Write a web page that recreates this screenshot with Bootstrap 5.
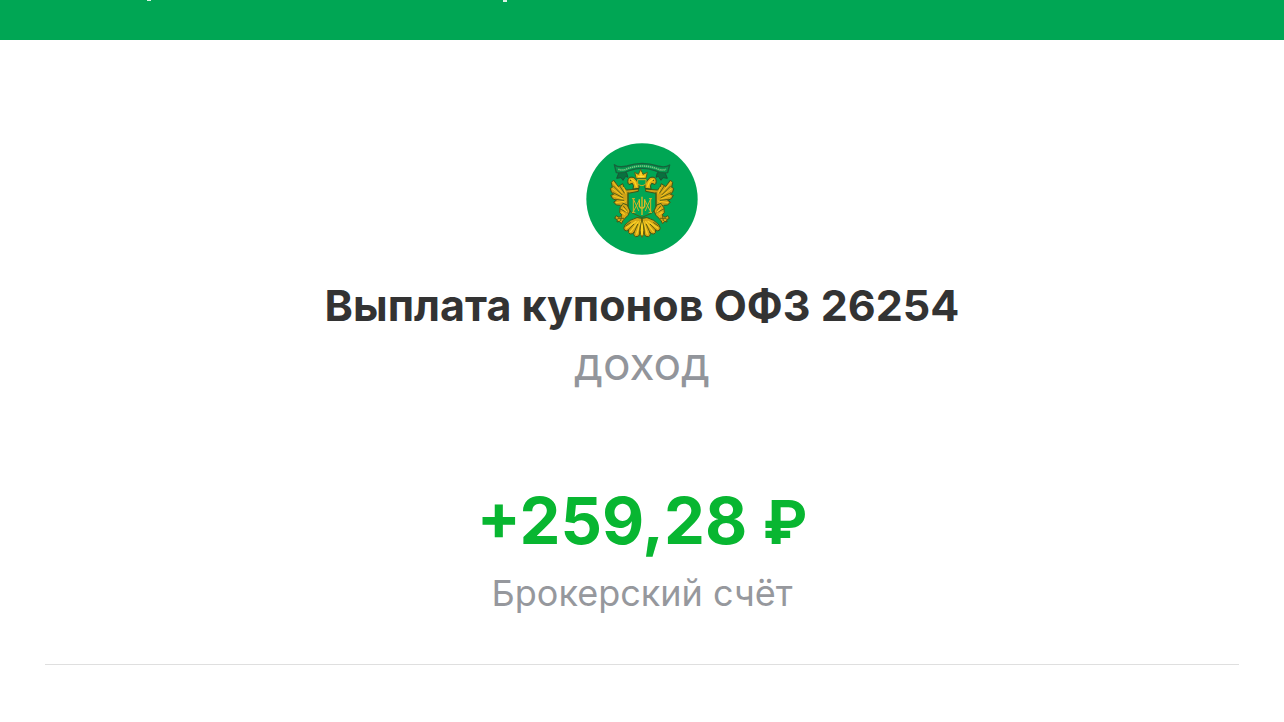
<!DOCTYPE html>
<html lang="ru">
<head>
<meta charset="utf-8">
<meta name="viewport" content="width=device-width, initial-scale=1">
<title>Выплата купонов ОФЗ 26254</title>
<link href="https://cdn.jsdelivr.net/npm/bootstrap@5.3.0/dist/css/bootstrap.min.css" rel="stylesheet">
<style>
body{font-family:Inter,"Liberation Sans",sans-serif;background:#fff;color:#333}
.topbar{height:40px;background:#00a654}
.tail{width:4px;height:1px;background:#d9f2e5}
.tail-first{margin-left:147px}
.tail-second{margin-left:352px;height:2px}
.operation{padding:103px 45px 0}
.emblem{width:112px;height:112px}
.op-title{font-size:43px;line-height:52px;font-weight:700;margin:24px 0 0}
.op-kind{font-size:46px;line-height:60px;color:#92959b;margin:2px 0 0}
.op-sum{font-size:65px;line-height:80px;font-weight:700;color:#08b631;margin:88px 0 0}
.currency{font-size:60px;line-height:60px}
.op-account{font-size:36px;line-height:44px;color:#96989d;margin:10px 0 0}
.rule{border-top:1px solid #dfdfdf;margin:49px 0 0;opacity:1;width:100%}
</style>
</head>
<body>
<header class="topbar d-flex align-items-start" aria-hidden="true">
<span class="tail tail-first"></span><span class="tail tail-second"></span>
</header>
<main class="operation d-flex flex-column align-items-center text-center">
<svg class="emblem" viewBox="19 15 336 336" role="img" aria-label="Минфин России">
<circle cx="187" cy="183" r="167" fill="#00a654"/>
<defs>
<g id="side" stroke-linejoin="round" stroke-linecap="round">
<path d="M101 127L95 133L98 148L92 151L95 162L102 169L93 172L99 182L110 187L102 192L110 201L122 202L130 208L145 204V166L176 160V153L141 156Q131 150 129 137L117 145Z" fill="#cfa118" stroke="#3e5717" stroke-width="3"/>
<path d="M101 134L128 165M99 153L128 174M101 174L130 183M109 194L132 190M124 202L139 188M132 148L138 166" fill="none" stroke="#f8c81c" stroke-width="3"/>
<path d="M101 144L127 170M100 164L130 179M107 184L132 187M121 145L134 165" fill="none" stroke="#5d6111" stroke-width="3"/>
<path d="M145 135Q142 123 151 118Q164 115 170 127L178 137V151L160 153Q164 142 158 136L149 139Z" fill="#dfad17" stroke="#344e1a" stroke-width="3"/>
<path d="M155 125L165 131L170 145" fill="none" stroke="#ffd51c" stroke-width="4"/>
<circle cx="153" cy="127" r="2" fill="#344e1a"/>
<path d="M145 163V203Q147 222 166 229L187 238" fill="none" stroke="#416116" stroke-width="3"/>
<path d="M129 197Q117 209 120 224L127 231L118 238L110 233L105 241L113 245L112 252L119 250L125 257L130 248L136 241L145 232L151 219L143 202Z" fill="#d9a717" stroke="#425817" stroke-width="3"/>
<path d="M122 213L145 225M131 204L143 220M115 241L132 241M126 231L123 248" fill="none" stroke="#67600f" stroke-width="3"/>
<path d="M132 212L142 222M127 223L134 229" fill="none" stroke="#f8c81d" stroke-width="4"/>
<path d="M171 239Q150 244 136 261Q129 272 135 277Q141 281 147 275Q143 285 151 288Q158 290 164 281Q159 292 168 296Q177 298 181 287L187 242Z" fill="#d5a516" stroke="#425817" stroke-width="3"/>
<path d="M169 250L140 270M176 251L153 281M183 250L171 288" fill="none" stroke="#f8d128" stroke-width="4"/>
<path d="M162 259L146 276M174 259L163 284M182 262L179 291M152 254L138 264" fill="none" stroke="#59600f" stroke-width="3"/>
<path d="M161 182V222M162 185L177 218M162 219L178 188M158 182H165M158 223H166" fill="none" stroke="#d5b226" stroke-width="3"/>
<path d="M118 103L111 121L124 119L130 127L138 115L145 118L141 105Z" fill="#08713f" stroke="#1d5134" stroke-width="3"/>
</g>
</defs>
<use href="#side"/><use href="#side" transform="matrix(-1 0 0 1 374 0)"/>
<path d="M169 119L165 103L176 109L183 94L190 109L203 103L199 121H170Z" fill="#f4bd12" stroke="#51601a" stroke-width="3"/>
<path d="M175 116H194M184 103V118" stroke="#ffe342" stroke-width="3"/>
<path d="M174 125H199V137Q187 149 174 137Z" fill="#00a654" stroke="#d5ad1d" stroke-width="3"/>
<path d="M187 176V231M179 184V205Q187 217 195 205V184" fill="none" stroke="#e1b924" stroke-width="4"/>
<path d="M187 242Q176 284 187 298Q198 284 187 242Z" fill="#ffd621" stroke="#62600f" stroke-width="3"/>
<path d="M104 80Q116 90 142 84Q187 69 234 84Q256 90 270 81L264 104Q245 107 226 98Q187 84 149 98Q129 107 110 104Z" fill="#07964e" stroke="#16633c" stroke-width="4" stroke-linejoin="round"/>
<path d="M116 94Q130 99 146 91Q187 77 229 91Q246 99 259 94" fill="none" stroke="#77c781" stroke-width="5" stroke-dasharray="4 2"/>
</svg>
<h1 class="op-title">Выплата купонов ОФЗ 26254</h1>
<p class="op-kind">доход</p>
<p class="op-sum">+259,28 <span class="currency">₽</span></p>
<p class="op-account">Брокерский счёт</p>
<hr class="rule">
</main>
<script src="https://cdn.jsdelivr.net/npm/bootstrap@5.3.0/dist/js/bootstrap.bundle.min.js"></script>
</body>
</html>
